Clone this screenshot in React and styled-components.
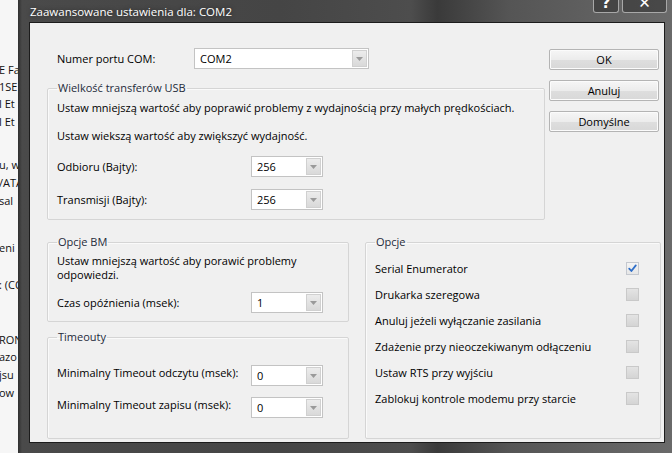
import styled, { createGlobalStyle } from "styled-components";

const GlobalStyle = createGlobalStyle`
  html, body {
    margin: 0;
    padding: 0;
  }
  body {
    font-family: "Open Sans", "Noto Sans", sans-serif;
    font-size: 11px;
    color: #000;
    background: #f4f4f4;
  }
`;

const backdropLines = [
  { text: "E Fa", y: 70 },
  { text: "1SE", y: 87 },
  { text: "l Et", y: 104 },
  { text: "l Et", y: 122 },
  { text: "u, w", y: 165 },
  { text: "/ATA", y: 183 },
  { text: "sal", y: 201 },
  { text: "eni", y: 248 },
  { text: ": (CO", y: 285 },
  { text: "RON", y: 340 },
  { text: "azo", y: 357 },
  { text: "jsu", y: 375 },
  { text: "ow", y: 393 },
];

const options = [
  { label: "Serial Enumerator", checked: true },
  { label: "Drukarka szeregowa", checked: false },
  { label: "Anuluj jeżeli wyłączanie zasilania", checked: false },
  { label: "Zdażenie przy nieoczekiwanym odłączeniu", checked: false },
  { label: "Ustaw RTS przy wyjściu", checked: false },
  { label: "Zablokuj kontrole modemu przy starcie", checked: false },
];

function Combo({ value, width }) {
  return (
    <ComboBox $width={width}>
      <ComboValue>{value}</ComboValue>
      <ComboArrow>
        <svg width="7" height="4" viewBox="0 0 7 4">
          <path d="M0 0 L7 0 L3.5 4 Z" fill="#9a9a9a" />
        </svg>
      </ComboArrow>
    </ComboBox>
  );
}

function Checkbox({ checked }) {
  return (
    <CheckBox $checked={checked}>
      {checked && (
        <svg width="11" height="11" viewBox="0 0 11 11">
          <path
            d="M2.2 5.6 L4.4 8 L8.8 2.4"
            fill="none"
            stroke="#2f6fc9"
            strokeWidth="1.8"
            strokeLinecap="round"
            strokeLinejoin="round"
          />
        </svg>
      )}
    </CheckBox>
  );
}

export default function App() {
  let prev = 0;
  return (
    <>
      <GlobalStyle />
      <Screen>
        <Backdrop>
          {backdropLines.map((line, i) => {
            const top = line.y - 8 - prev;
            prev = line.y + 8;
            return (
              <BackdropLine key={i} style={{ marginTop: top }}>
                {line.text}
              </BackdropLine>
            );
          })}
        </Backdrop>
        <Window>
          <TitleBar>
            <Title>Zaawansowane ustawienia dla: COM2</Title>
            <CaptionButtons>
              <CaptionButton $width={26}>?</CaptionButton>
              <CaptionButton $width={45}>✕</CaptionButton>
            </CaptionButtons>
          </TitleBar>
          <ClientFrame>
            <Client>
              <TopSection>
                <MainColumn>
                  <PortRow>
                    <PortLabel>Numer portu COM:</PortLabel>
                    <Combo value="COM2" width={175} />
                  </PortRow>
                  <UsbGroup>
                    <Legend>Wielkość transferów USB</Legend>
                    <Note>
                      Ustaw mniejszą wartość aby poprawić problemy z wydajnością
                      przy małych prędkościach.
                    </Note>
                    <Note $gap={12}>
                      Ustaw wiekszą wartość aby zwiększyć wydajność.
                    </Note>
                    <FieldRow $gap={12}>
                      <FieldLabel>Odbioru (Bajty):</FieldLabel>
                      <Combo value="256" width={72} />
                    </FieldRow>
                    <FieldRow $gap={12}>
                      <FieldLabel>Transmisji (Bajty):</FieldLabel>
                      <Combo value="256" width={72} />
                    </FieldRow>
                  </UsbGroup>
                </MainColumn>
                <ButtonColumn>
                  <DialogButton>OK</DialogButton>
                  <DialogButton>Anuluj</DialogButton>
                  <DialogButton>Domyślne</DialogButton>
                </ButtonColumn>
              </TopSection>
              <BottomSection>
                <LeftStack>
                  <BmGroup>
                    <Legend>Opcje BM</Legend>
                    <WrappedNote>
                      Ustaw mniejszą wartość aby porawić problemy odpowiedzi.
                    </WrappedNote>
                    <FieldRow $gap={10}>
                      <FieldLabel>Czas opóźnienia (msek):</FieldLabel>
                      <Combo value="1" width={72} />
                    </FieldRow>
                  </BmGroup>
                  <TimeoutGroup>
                    <Legend>Timeouty</Legend>
                    <FieldRow $top>
                      <FieldLabel>Minimalny Timeout odczytu (msek):</FieldLabel>
                      <Combo value="0" width={72} />
                    </FieldRow>
                    <FieldRow $top $gap={11}>
                      <FieldLabel>Minimalny Timeout zapisu (msek):</FieldLabel>
                      <Combo value="0" width={72} />
                    </FieldRow>
                  </TimeoutGroup>
                </LeftStack>
                <OptionsGroup>
                  <Legend>Opcje</Legend>
                  {options.map((opt) => (
                    <OptionRow key={opt.label}>
                      <span>{opt.label}</span>
                      <Checkbox checked={opt.checked} />
                    </OptionRow>
                  ))}
                </OptionsGroup>
              </BottomSection>
            </Client>
          </ClientFrame>
        </Window>
      </Screen>
    </>
  );
}

const Screen = styled.div`
  display: flex;
  width: 672px;
  height: 453px;
  overflow: hidden;
`;

const Backdrop = styled.div`
  width: 18px;
  flex-shrink: 0;
  overflow: hidden;
  background: #f6f6f6;
  display: flex;
  flex-direction: column;
`;

const BackdropLine = styled.div`
  height: 16px;
  line-height: 16px;
  white-space: nowrap;
  margin-left: -1px;
  color: #111;
`;

const Window = styled.div`
  flex: 1;
  display: flex;
  flex-direction: column;
  background: linear-gradient(
    90deg,
    #2f2f2f 0px,
    #4a4a4a 4px,
    #454545 40%,
    #4d4d4d 60%,
    #3a3a3a 64%,
    #555 75%,
    #6a6a6a 100%
  );
`;

const TitleBar = styled.div`
  height: 22px;
  display: flex;
  align-items: flex-start;
  padding: 0 6px 0 12px;
`;

const Title = styled.div`
  flex: 1;
  color: #fff;
  font-size: 11.5px;
  line-height: 22px;
  padding-top: 1px;
  text-shadow: 0 0 4px rgba(0, 0, 0, 0.5);
`;

const CaptionButtons = styled.div`
  display: flex;
  gap: 3px;
`;

const CaptionButton = styled.div`
  width: ${(p) => p.$width}px;
  height: 13px;
  box-sizing: border-box;
  border: 1px solid #a8a8a8;
  border-top: none;
  border-radius: 0 0 3px 3px;
  background: rgba(40, 40, 40, 0.5);
  color: #fff;
  font-family: "DejaVu Sans", sans-serif;
  font-weight: bold;
  font-size: 15px;
  line-height: 1;
  display: flex;
  align-items: flex-end;
  justify-content: center;
  overflow: hidden;
  padding-bottom: 1px;
`;

const ClientFrame = styled.div`
  flex: 1;
  display: flex;
  padding: 0 8px 10px 11px;
`;

const Client = styled.div`
  flex: 1;
  border: 1px solid #1c1c1c;
  background: #f0f0f0;
  padding: 25px 3px 2px 17px;
  display: flex;
  flex-direction: column;
`;

const TopSection = styled.div`
  display: grid;
  grid-template-columns: 498px 110px;
  column-gap: 4px;
  align-items: start;
`;

const MainColumn = styled.div`
  display: flex;
  flex-direction: column;
`;

const PortRow = styled.div`
  display: flex;
  align-items: center;
  height: 21px;
  padding-left: 10px;
`;

const PortLabel = styled.span`
  width: 137px;
`;

const Group = styled.fieldset`
  margin: 0;
  min-width: 0;
  border: 1px solid #d5d5d5;
  border-radius: 2px;
  box-shadow: inset 1px 1px 0 #fafafa;
  display: flex;
  flex-direction: column;
`;

const UsbGroup = styled(Group)`
  margin-top: 11px;
  padding: 4px 9px 9px 9px;
`;

const BmGroup = styled(Group)`
  padding: 4px 9px 8px 9px;
`;

const TimeoutGroup = styled(Group)`
  margin-top: 7px;
  padding: 20px 9px 20px 9px;
`;

const OptionsGroup = styled(Group)`
  padding: 5px 21px 0 9px;
`;

const Legend = styled.legend`
  padding: 0 1px;
  line-height: 16px;
  color: #1e2b3a;
`;

const Note = styled.div`
  line-height: 16px;
  margin-top: ${(p) => p.$gap || 0}px;
`;

const WrappedNote = styled.div`
  line-height: 14px;
  max-width: 262px;
`;

const FieldRow = styled.div`
  display: flex;
  align-items: ${(p) => (p.$top ? "flex-start" : "center")};
  margin-top: ${(p) => p.$gap || 0}px;
`;

const FieldLabel = styled.span`
  width: 194px;
  flex-shrink: 0;
  line-height: 16px;
`;

const ComboBox = styled.div`
  width: ${(p) => p.$width}px;
  height: 21px;
  box-sizing: border-box;
  border: 1px solid #c3c3c3;
  background: #fff;
  display: flex;
`;

const ComboValue = styled.span`
  flex: 1;
  padding-left: 5px;
  line-height: 19px;
`;

const ComboArrow = styled.span`
  width: 15px;
  margin: 1px;
  box-sizing: border-box;
  border: 1px solid #d0d0d0;
  background: linear-gradient(#ececec, #d9d9d9);
  display: flex;
  align-items: center;
  justify-content: center;
`;

const ButtonColumn = styled.div`
  display: flex;
  flex-direction: column;
  gap: 10px;
  padding-top: 1px;
`;

const DialogButton = styled.button`
  height: 21px;
  box-sizing: border-box;
  border: 1px solid #b4b4b4;
  border-radius: 2px;
  background: linear-gradient(#f6f6f6 0%, #ececec 50%, #dedede 51%, #d8d8d8 100%);
  box-shadow: inset 0 0 0 1px #fbfbfb;
  font: inherit;
  color: #000;
  padding: 0;
`;

const BottomSection = styled.div`
  display: grid;
  grid-template-columns: 302px 296px;
  column-gap: 16px;
  margin-top: 14px;
  align-items: stretch;
`;

const LeftStack = styled.div`
  display: flex;
  flex-direction: column;
`;

const OptionRow = styled.div`
  height: 26px;
  display: flex;
  align-items: center;
  justify-content: space-between;
`;

const CheckBox = styled.span`
  width: 13px;
  height: 13px;
  box-sizing: border-box;
  border: 1px solid ${(p) => (p.$checked ? "#c4c8cf" : "#c9c9c9")};
  background: ${(p) =>
    p.$checked
      ? "linear-gradient(#f4f4f4, #e6e6e6)"
      : "linear-gradient(#e4e4e4, #d4d4d4)"};
  display: flex;
  align-items: center;
  justify-content: center;
`;
